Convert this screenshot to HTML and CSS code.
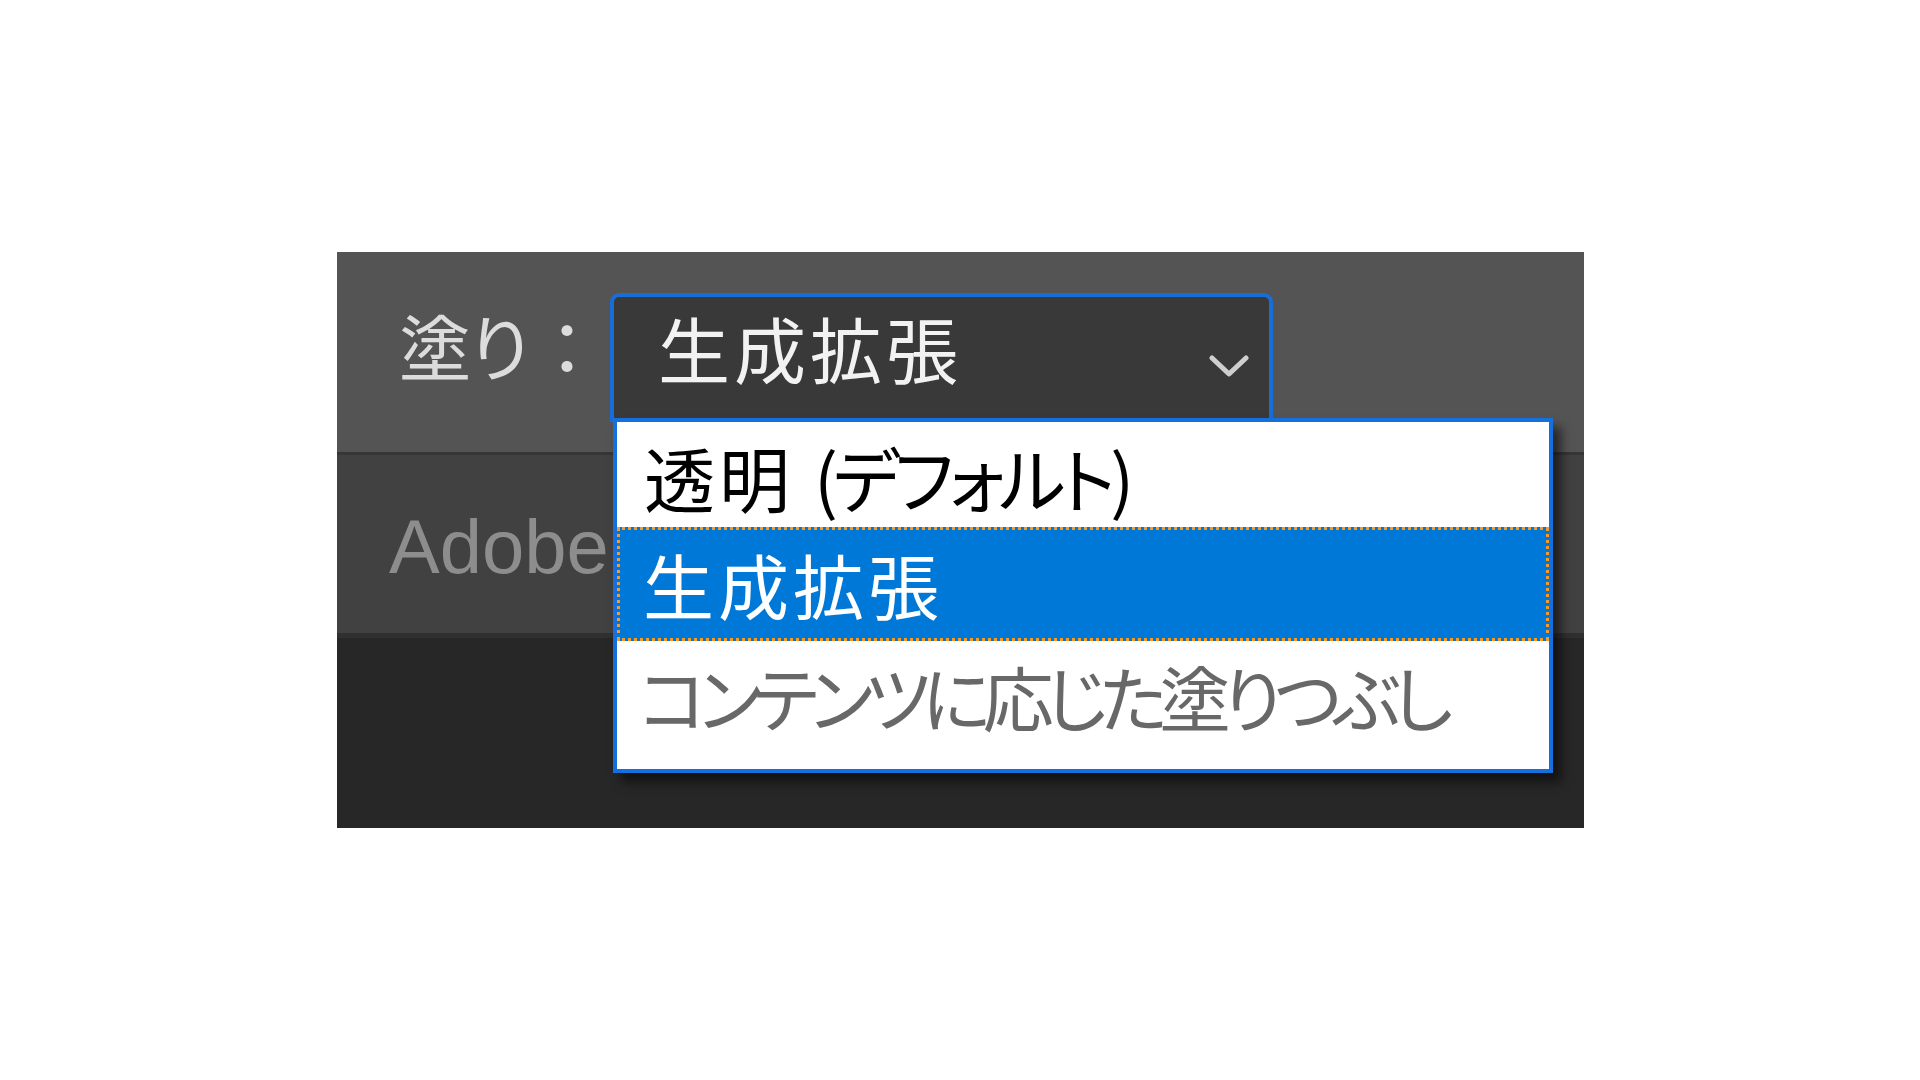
FILE: index.html
```html
<!DOCTYPE html>
<html lang="ja">
<head>
<meta charset="utf-8">
<title>塗り</title>
<link rel="stylesheet" href="styles.css">
</head>
<body>
<div class="panel">
  <div class="toolbar">
    <div class="label">塗り：</div>
    <div class="select">
      <span class="select-text">生成拡張</span>
      <svg class="chevron" width="40" height="24" viewBox="0 0 40 24"><path d="M3 3 L20 19 L37 3" fill="none" stroke="#cfcfcf" stroke-width="5" stroke-linecap="round" stroke-linejoin="round"/></svg>
    </div>
  </div>
  <div class="strip"><span class="brand">Adobe</span></div>
  <div class="canvas"></div>
  <div class="dropdown">
    <div class="option opt-first"><span class="wide">透明 </span>(デフォルト)</div>
    <div class="option opt-selected">生成拡張</div>
    <div class="option opt-last">コンテンツに応じた塗りつぶし</div>
  </div>
</div>
</body>
</html>
```

FILE: styles.css
```css
html, body {
  margin: 0;
  padding: 0;
  background: #ffffff;
}
body {
  width: 1920px;
  height: 1080px;
  overflow: hidden;
  font-family: "Noto Sans CJK JP", "Noto Sans", sans-serif;
}
.panel {
  position: relative;
  margin: 252px 0 0 337px;
  width: 1247px;
  height: 576px;
  display: flex;
  flex-direction: column;
  overflow: hidden;
}
.toolbar {
  height: 200px;
  flex: 0 0 auto;
  background: #545454;
  display: flex;
  align-items: flex-start;
  padding: 41px 0 0 62px;
  box-sizing: border-box;
}
.label {
  width: 211px;
  flex: 0 0 auto;
  margin-top: 15px;
  font-size: 72px;
  line-height: 1;
  color: #dcdcdc;
  letter-spacing: -6px;
  white-space: nowrap;
}
.select {
  width: 663px;
  height: 129px;
  box-sizing: border-box;
  border: 4px solid #1a6cd6;
  border-radius: 9px 9px 0 0;
  background: #393939;
  display: flex;
  align-items: flex-start;
  padding: 14px 20px 0 44px;
}
.select-text {
  font-size: 72px;
  line-height: 1;
  color: #f2f2f2;
  letter-spacing: 4px;
}
.chevron {
  margin-left: auto;
  margin-top: 44px;
}
.strip {
  height: 186px;
  flex: 0 0 auto;
  box-sizing: border-box;
  background: #414141;
  border-top: 3px solid #363636;
  border-bottom: 5px solid #303030;
  padding: 54px 0 0 52px;
}
.brand {
  font-family: "Liberation Sans", Arial, sans-serif;
  font-size: 76px;
  line-height: 1;
  color: #8d8d8d;
  display: block;
}
.canvas {
  flex: 1 1 auto;
  background: #272727;
}
.dropdown {
  position: absolute;
  left: 276px;
  top: 166px;
  width: 940px;
  height: 355px;
  box-sizing: border-box;
  border: 4px solid #1570dd;
  background: #ffffff;
  box-shadow: 8px 9px 10px rgba(0, 0, 0, 0.55);
  display: flex;
  flex-direction: column;
}
.option {
  box-sizing: border-box;
  padding: 19px 0 0 27px;
  font-size: 71px;
  line-height: 1;
  white-space: nowrap;
  font-feature-settings: "palt" 1;
  color: #000000;
}
.opt-first {
  height: 105px;
  letter-spacing: -5px;
}
.opt-first .wide {
  letter-spacing: 4px;
}
.opt-selected {
  height: 114px;
  background: #0078d7;
  color: #ffffff;
  outline: 3px dotted #f59a2c;
  outline-offset: -3px;
  padding-top: 21px;
  padding-left: 26px;
  letter-spacing: 4px;
}
.opt-last {
  flex: 1 1 auto;
  color: #686868;
  padding-left: 22px;
  letter-spacing: -8px;
}
```
